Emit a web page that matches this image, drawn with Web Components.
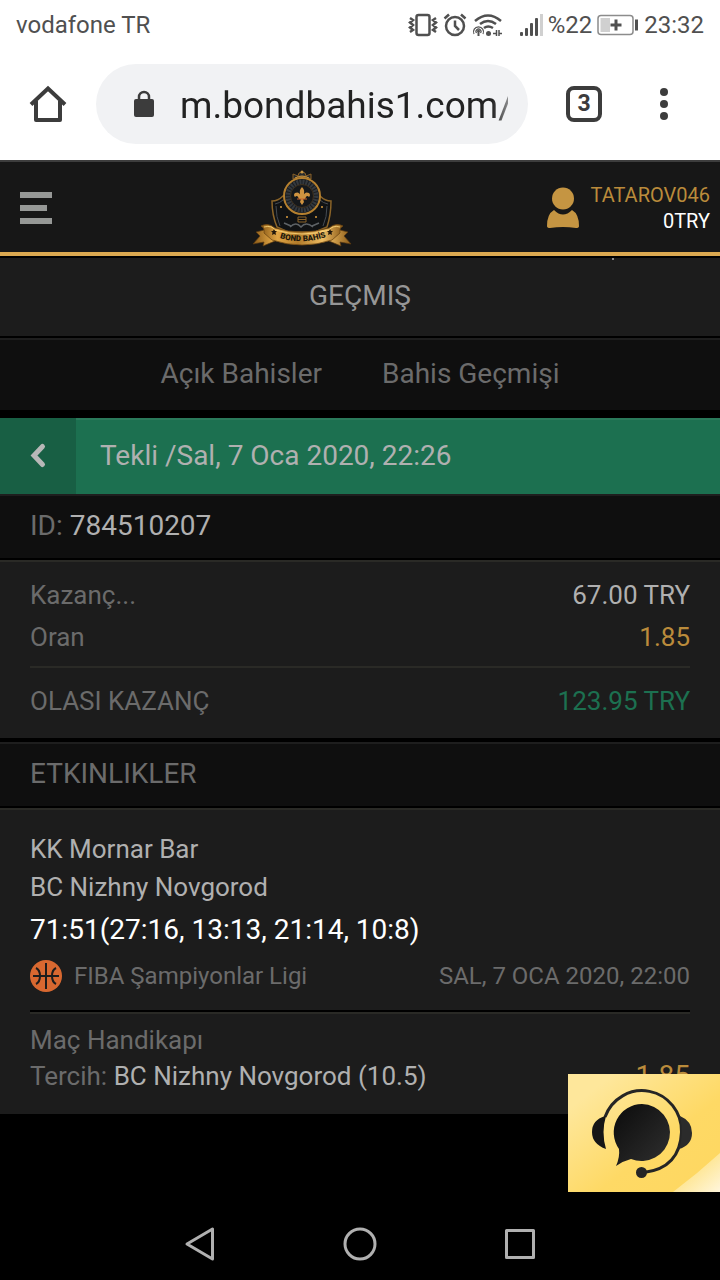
<!DOCTYPE html>
<html lang="tr">
<head>
<meta charset="utf-8">
<meta name="viewport" content="width=device-width, initial-scale=1">
<title>Bahis Geçmişi</title>
<style>
  body {
    margin: 0;
    background: #000;
    font-family: Roboto, "Liberation Sans", sans-serif;
    font-size: 26px;
    color: #6b6b6b;
    --panel: #1c1c1c;
    --dark: #0f0f0f;
    --line: #2a2a26;
    --gold: #ba8b3b;
    --green: #1c7050;
    --light: #b0b0b0;
  }
</style>
</head>
<body>
<bet-app></bet-app>

<script>
class StatusBar extends HTMLElement {
  connectedCallback() {
    this.attachShadow({ mode: 'open' }).innerHTML = `
    <style>
      :host {
        display: flex;
        align-items: center;
        justify-content: space-between;
        padding: 0 16px;
        background: #fff;
        color: #505050;
        font-size: 24px;
        line-height: 50px;
      }

      .icons {
        display: flex;
        align-items: center;
        gap: 5px;
      }

      svg {
        display: block;
      }

      .signal {
        margin-left: 12px;
      }
    </style>
    <span>vodafone TR</span>
    <div class="icons">
      <svg width="30" height="24" viewBox="0 0 30 24" fill="none" stroke="#505050">
        <rect x="8.5" y="2" width="13" height="20" rx="2" stroke-width="2.5"/>
        <path d="M2 5l3 2-3 2.500 3 2.500-3 2.500 3 2.500-3 2M28 5l-3 2 3 2.500-3 2.500 3 2.500-3 2.500 3 2" stroke-width="2.500"/>
      </svg>
      <svg width="24" height="24" viewBox="0 0 24 24" fill="none" stroke="#505050" stroke-width="2.500">
        <circle cx="12" cy="13" r="9"/>
        <path d="M12 7.500V13l4 4M1.500 5.500 6 1.500M22.500 5.500 18 1.500"/>
      </svg>
      <svg width="30" height="24" viewBox="0 0 30 24" fill="none" stroke="#505050">
        <path d="M3 8Q16-3 29 8M8 11q8-6 16 0M12 15q4-3 9 0" stroke-width="2.500"/>
        <path d="M2 21a5 5 0 1 1 9 0M4.500 20a2.500 2.500 0 1 1 4 0" stroke-width="1.200"/>
        <circle cx="6.500" cy="18" r="1" fill="#505050"/>
        <path d="M6.500 18v5" stroke-width="2"/>
        <circle cx="16.500" cy="20.500" r="2.500" fill="#505050" stroke="none"/>
        <path d="M21 20.500h3.500V17v6M30 20.500h-3V17v6" stroke-width="1.500"/>
      </svg>
      <svg class="signal" width="24" height="24" viewBox="0 0 24 24" fill="#505050">
        <rect x="1" y="19" width="3" height="4" rx="1"/>
        <rect x="6" y="15" width="3" height="8" rx="1"/>
        <rect x="11" y="10" width="3" height="13" rx="1"/>
        <rect x="16" y="5" width="3" height="18" rx="1"/>
        <rect x="21" y="1" width="3" height="22" fill="#d0d0d0"/>
      </svg>
      <span>%22</span>
      <svg width="42" height="22" viewBox="0 0 42 22">
        <rect x="1" y="1.500" width="35" height="19" rx="3" fill="none" stroke="#8c8c8c" stroke-width="1.500"/>
        <path d="M3.500 4H13v14H3.500z" fill="#d0d0d0"/>
        <path d="M19 5.500v11M13.500 11h11" stroke="#505050" stroke-width="3"/>
        <path d="M39.500 5.500v11" stroke="#505050" stroke-width="3"/>
      </svg>
      <span>23:32</span>
    </div>
    `;
  }
}

class BrowserBar extends HTMLElement {
  connectedCallback() {
    this.attachShadow({ mode: 'open' }).innerHTML = `
    <style>
      :host {
        display: flex;
        align-items: center;
        padding: 14px 48px 16px 28px;
        background: #fff;
        border-bottom: 2px solid #3d3d3d;
      }

      button {
        display: grid;
        place-items: center;
        margin: 0;
        padding: 0;
        border: 0;
        background: none;
        color: #3c3c3c;
        font: inherit;
        cursor: pointer;
      }

      svg {
        display: block;
      }

      .address {
        display: flex;
        align-items: center;
        flex: 1;
        min-width: 0;
        height: 80px;
        margin: 0 38px 0 28px;
        padding: 0 20px 0 36px;
        box-sizing: border-box;
        border-radius: 40px;
        background: #f1f2f4;
      }

      input {
        flex: 1;
        min-width: 0;
        margin-left: 24px;
        padding: 2px 0 0;
        border: 0;
        outline: 0;
        background: none;
        font: inherit;
        font-size: 37px;
        color: #222;
        -webkit-mask-image: linear-gradient(to left, rgba(0, 0, 0, .5), #000 16px);
        mask-image: linear-gradient(to left, rgba(0, 0, 0, .5), #000 16px);
      }

      .tabs {
        width: 36px;
        height: 36px;
        margin-right: 54px;
        box-sizing: border-box;
        border: 4px solid #3c3c3c;
        border-radius: 8px;
        font-size: 23px;
        font-weight: 700;
        line-height: 28px;
      }
    </style>
    <button aria-label="Ana sayfa">
      <svg width="40" height="40" viewBox="0 0 40 40" fill="none" stroke="#3c3c3c" stroke-width="4" stroke-linejoin="round">
        <path d="M3 20.500 20 4.500l17 16" stroke-linejoin="miter"/>
        <path d="M8 17v19h24V17"/>
      </svg>
    </button>
    <div class="address">
      <svg width="24" height="28" viewBox="0 0 24 28">
        <path d="M7 10V7a5 5 0 0 1 10 0v3" fill="none" stroke="#3c3c3c" stroke-width="2.500"/>
        <rect x="2" y="9" width="20" height="18" rx="2" fill="#3c3c3c"/>
      </svg>
      <input type="text" aria-label="Adres" value="m.bondbahis1.com/">
    </div>
    <button class="tabs" aria-label="Sekmeler">3</button>
    <button aria-label="Menü">
      <svg width="16" height="40" viewBox="0 0 16 40" fill="#3c3c3c">
        <circle cx="8" cy="8" r="4"/>
        <circle cx="8" cy="20" r="4"/>
        <circle cx="8" cy="32" r="4"/>
      </svg>
    </button>
    `;
  }
}

class BondLogo extends HTMLElement {
  connectedCallback() {
    this.attachShadow({ mode: 'open' }).innerHTML = `
    <style>
      :host {
        display: block;
      }

      svg {
        display: block;
      }
    </style>
    <svg width="100" height="80" viewBox="0 0 100 80">
      <defs>
        <linearGradient id="gold" x1="0" x2="1" y1="0" y2="0">
          <stop offset="0" stop-color="#8a5a18"/>
          <stop offset=".2" stop-color="#e0a544"/>
          <stop offset=".45" stop-color="#b07a2a"/>
          <stop offset=".75" stop-color="#efbd62"/>
          <stop offset="1" stop-color="#8a5a18"/>
        </linearGradient>
        <path id="curve" d="M28 70Q50 77 74 69"/>
      </defs>
      <!-- shield -->
      <path d="M20 33q6 0 11-5h37q5 5 11 5 0 14-4 26l-12 5H36l-11-5q-5-12-5-26z" fill="#101214" stroke="#8b6428" stroke-width="1.500"/>
      <path d="M23 36q5-1 8-4M76 36q-5-1-8-4M24 38q0 11 4 20M75 38q0 11-4 20" fill="none" stroke="#454b52"/>
      <path d="M29 38v2M70 38v2M35 48v2M64 48v2" stroke="#a87a34" stroke-width="2"/>
      <path d="M38 59q6-6 11 0 5-6 12 0M32 55l7 3M67 55l-7 3" fill="none" stroke="#5d6266" stroke-width="1.500"/>
      <!-- crown -->
      <path d="M41 11V6l5 2 1-3 3-1 3 1 1 3 5-2v5q-9-5-18 0z" fill="#262a2e" stroke="#8a6026"/>
      <circle cx="50" cy="4" r="1.500" fill="#c89644"/>
      <path d="M43 10q7-4 14 0" fill="none" stroke="#c89644"/>
      <!-- medallion -->
      <circle cx="50" cy="28" r="18" fill="#191c20" stroke="#b5802f" stroke-width="2"/>
      <circle cx="50" cy="28" r="14" fill="none" stroke="#34393e" stroke-width="5" stroke-dasharray="2 1"/>
      <circle cx="50" cy="28" r="11.500" fill="#15181b" stroke="#4a371e" stroke-width=".8"/>
      <path d="M50 19q-4 4-1 9-2-5-6-3-2 2 0 4 2-2 3 0 1 3 3 2l-1 3 2 3 2-3-1-3q2 1 3-2 1-2 3 0 2-2 0-4-4-2-6 3 3-5-1-9z" fill="#cf9340"/>
      <path d="M45 31h10" stroke="#c8612c"/>
      <path d="M46 49h8v5h-8zM46 51.500h8" fill="none" stroke="#8a6229"/>
      <!-- ribbon -->
      <path d="M16 61 4 64l4 4-7 8 11-2-1 4 12-5zM84 61l12 3-4 4 7 8-11-2 1 4-12-5z" fill="url(#gold)" stroke="#5c3a10" stroke-width=".7"/>
      <path d="M9 58q7-4 14 2 27 8 54 0 7-6 14-2-4 2-3 7l-8 7q-30 10-60 0l-8-7q1-5-3-7z" fill="url(#gold)" stroke="#6f4813" stroke-width=".8"/>
      <path d="M12 59q8-2 11 3 27 8 54 0 4-5 11-3" fill="none" stroke="#ffda7f" stroke-width=".8"/>
      <path d="m22 61 1 2h2l-1.500 1.500.5 2.500-2-1-2 1 .5-2.500L19 63h2zM78 61l1 2h2l-1.500 1.500.5 2.500-2-1-2 1 .5-2.500L75 63h2z" fill="#21180c"/>
      <text font-family="Roboto, sans-serif" font-size="8" font-weight="900" fill="#21180c"><textPath href="#curve" startOffset="50%" text-anchor="middle">BOND BAHİS</textPath></text>
    </svg>
    `;
  }
}

class SiteHeader extends HTMLElement {
  connectedCallback() {
    this.attachShadow({ mode: 'open' }).innerHTML = `
    <style>
      :host {
        display: flex;
        align-items: center;
        justify-content: space-between;
        padding: 6px 10px 4px 20px;
        background: #171717;
        border-bottom: 4px solid #dba850;
        font-size: 20px;
        line-height: 26px;
      }

      button {
        width: 38px;
        height: 44px;
        margin: 0;
        padding: 0;
        border: 0;
        background: none;
        cursor: pointer;
      }

      svg {
        display: block;
      }

      .user {
        display: flex;
        align-items: center;
        gap: 12px;
        color: var(--gold);
        text-align: right;
        text-decoration: none;
      }

      .balance {
        color: #fff;
      }
    </style>
    <button aria-label="Menü">
      <svg width="32" height="32" viewBox="0 0 32 32" fill="#969896">
        <path d="M0 0h32v6H0zM0 13h27v6H0zM0 26h32v6H0z"/>
      </svg>
    </button>
    <bond-logo></bond-logo>
    <a class="user" href="#hesap">
      <svg width="32" height="42" viewBox="0 0 32 42" fill="#c59542">
        <circle cx="16" cy="11.500" r="11"/>
        <path d="M7 23q9 9 18 0 7 4 7 16 0 2-3 2-13-2-26 0-3 0-3-2 0-12 7-16z"/>
      </svg>
      <div>
        <div><slot name="name"></slot></div>
        <div class="balance"><slot name="balance"></slot></div>
      </div>
    </a>
    `;
  }
}

class HistoryNav extends HTMLElement {
  connectedCallback() {
    this.attachShadow({ mode: 'open' }).innerHTML = `
    <style>
      :host {
        display: block;
        padding-top: 2px;
        font-size: 28px;
      }

      h1 {
        position: relative;
        margin: 0 0 2px;
        padding-bottom: 2px;
        background: var(--panel);
        color: #969696;
        font-size: 28px;
        font-weight: 400;
        line-height: 76px;
        text-align: center;
      }

      h1::after {
        content: "";
        position: absolute;
        top: 0;
        right: 106px;
        width: 2px;
        height: 2px;
        background: #8c8c8c;
      }

      nav {
        display: flex;
        justify-content: center;
        gap: 60px;
        padding-bottom: 2px;
        background: var(--dark);
        border-top: 2px solid #1e1e1e;
        line-height: 68px;
      }

      a {
        color: inherit;
        text-decoration: none;
      }
    </style>
    <h1>GEÇMIŞ</h1>
    <nav>
      <a href="#acik">Açık Bahisler</a>
      <a href="#gecmis">Bahis Geçmişi</a>
    </nav>
    `;
  }
}

class SlipTitle extends HTMLElement {
  connectedCallback() {
    this.attachShadow({ mode: 'open' }).innerHTML = `
    <style>
      :host {
        display: flex;
        margin-top: 8px;
        background: var(--green);
        box-shadow: inset 0 2px #2a795b;
        color: var(--light);
        font-size: 28px;
        line-height: 76px;
      }

      button {
        display: grid;
        place-items: center;
        width: 76px;
        margin: 0;
        padding: 0;
        border: 0;
        background: #185f44;
        cursor: pointer;
      }

      h2 {
        margin: 0 0 0 24px;
        font-size: 28px;
        font-weight: 400;
      }
    </style>
    <button aria-label="Geri">
      <svg width="24" height="28" viewBox="0 0 24 28" fill="none" stroke="#b8b8b8" stroke-width="5" stroke-linecap="round">
        <path d="M16.500 4.500 8 13.500l8.500 9"/>
      </svg>
    </button>
    <h2><slot></slot></h2>
    `;
  }
}

class SectionBar extends HTMLElement {
  connectedCallback() {
    this.attachShadow({ mode: 'open' }).innerHTML = `
    <style>
      :host {
        display: block;
        padding: 0 30px 2px;
        margin-bottom: 2px;
        background: var(--dark);
        border-top: 2px solid #1e1e1e;
        font-size: 28px;
        line-height: 60px;
      }

      ::slotted(b) {
        color: var(--light);
        font-weight: 400;
      }
    </style>
    <slot></slot>
    `;
  }
}

class BetSummary extends HTMLElement {
  connectedCallback() {
    this.attachShadow({ mode: 'open' }).innerHTML = `
    <style>
      :host {
        display: block;
        margin-bottom: 4px;
        padding: 12px 30px 16px;
        background: var(--panel);
        border-top: 2px solid var(--line);
        line-height: 42px;
      }

      dl {
        margin: 0;
      }

      dl div {
        display: flex;
        justify-content: space-between;
      }

      dd {
        margin: 0;
        color: var(--light);
      }

      .odds {
        color: var(--gold);
      }

      .total {
        margin-top: 8px;
        padding-top: 12px;
        border-top: 2px solid var(--line);
      }

      .total dd {
        color: var(--green);
      }
    </style>
    <dl>
      <div><dt>Kazanç...</dt><dd>67.00 TRY</dd></div>
      <div><dt>Oran</dt><dd class="odds">1.85</dd></div>
      <div class="total"><dt>OLASI KAZANÇ</dt><dd>123.95 TRY</dd></div>
    </dl>
    `;
  }
}

class EventCard extends HTMLElement {
  connectedCallback() {
    this.attachShadow({ mode: 'open' }).innerHTML = `
    <style>
      :host {
        display: block;
        padding: 20px 30px;
        background: var(--panel);
        border-top: 2px solid var(--line);
        line-height: 38px;
      }

      .team {
        color: var(--light);
      }

      .score {
        color: #fff;
        font-size: 28px;
        line-height: 48px;
      }

      .league {
        display: flex;
        align-items: center;
        gap: 12px;
        padding: 6px 0 18px;
        border-bottom: 2px solid #000;
        font-size: 24px;
        line-height: 32px;
      }

      .league time {
        margin-left: auto;
      }

      .pick {
        padding-top: 8px;
        border-top: 2px solid var(--line);
        line-height: 36px;
      }

      .row {
        display: flex;
        align-items: baseline;
        justify-content: space-between;
      }

      .odds {
        color: var(--gold);
        font-size: 28px;
      }
    </style>
    <div class="team"><slot name="home"></slot></div>
    <div class="team"><slot name="away"></slot></div>
    <div class="score"><slot name="score"></slot></div>
    <div class="league">
      <svg width="32" height="32" viewBox="0 0 32 32">
        <circle cx="16" cy="16" r="16" fill="#d86830"/>
        <path d="M16 3v26M3 16h26M6 8q4 2 4 8t-4 8M26 8q-4 2-4 8t4 8" fill="none" stroke="#1c1c1c" stroke-width="2"/>
      </svg>
      <slot name="league"></slot>
      <time datetime="2020-01-07T22:00"><slot name="time"></slot></time>
    </div>
    <div class="pick">
      <div><slot name="market"></slot></div>
      <div class="row">
        <div>Tercih: <span class="team"><slot name="pick"></slot></span></div>
        <div class="odds"><slot name="odds"></slot></div>
      </div>
    </div>
    `;
  }
}

class ChatButton extends HTMLElement {
  connectedCallback() {
    this.attachShadow({ mode: 'open' }).innerHTML = `
    <style>
      :host {
        display: block;
      }

      button {
        display: block;
        margin: 0;
        padding: 0;
        border: 0;
        background: none;
        cursor: pointer;
      }

      svg {
        display: block;
      }
    </style>
    <button aria-label="Canlı destek">
      <svg width="152" height="118" viewBox="0 0 152 118">
        <defs>
          <linearGradient id="bg" x1="0" y1="0" x2="1" y2="1">
            <stop offset=".15" stop-color="#fee79b"/>
            <stop offset=".6" stop-color="#fed965"/>
            <stop offset="1" stop-color="#fed760"/>
          </linearGradient>
          <linearGradient id="shine" x1="0" y1="0" x2="1" y2="1">
            <stop offset=".4" stop-color="#fee48c"/>
            <stop offset="1" stop-color="#fff6dc"/>
          </linearGradient>
          <linearGradient id="ink" x1="0" y1="0" x2="1" y2="1">
            <stop offset="0" stop-color="#0b0b0b"/>
            <stop offset="1" stop-color="#303030"/>
          </linearGradient>
        </defs>
        <path d="M0 0h152v118H0z" fill="url(#bg)"/>
        <path d="M105 118q24-18 47-39v39z" fill="url(#shine)"/>
        <path d="M37 43a39.500 40.500 0 0 1 76.500 15Q112 94 76 98.500" fill="none" stroke="#252525" stroke-width="3"/>
        <path d="M37 42q-13 4-13 16t14 17q-5-17 0-33z" fill="#161616"/>
        <path d="M112 42q12 5 12 17t-13 16q5-16 1-33z" fill="#2b2b2b"/>
        <circle cx="73.500" cy="98.500" r="5.500" fill="#252525"/>
        <path d="M74 30a28.500 28.500 0 1 1-11 55q-8 2-15 7 4-9 3-17A28.500 28.500 0 0 1 74 30z" fill="url(#ink)"/>
      </svg>
    </button>
    `;
  }
}

class SystemNav extends HTMLElement {
  connectedCallback() {
    this.attachShadow({ mode: 'open' }).innerHTML = `
    <style>
      :host {
        display: flex;
        align-items: center;
        justify-content: center;
        gap: 120px;
        height: 72px;
        background: #000;
      }

      button {
        margin: 0;
        padding: 0;
        border: 0;
        background: none;
        cursor: pointer;
      }

      svg {
        display: block;
        fill: none;
        stroke: #b0b0b0;
        stroke-width: 3;
        stroke-linejoin: round;
      }
    </style>
    <button aria-label="Geri"><svg width="40" height="40" viewBox="0 0 40 40"><path d="M32.500 5v30L7 20z"/></svg></button>
    <button aria-label="Ana ekran"><svg width="40" height="40" viewBox="0 0 40 40"><circle cx="20" cy="20" r="15"/></svg></button>
    <button aria-label="Son uygulamalar"><svg width="40" height="40" viewBox="0 0 40 40"><path d="M6.500 6.500h27v27h-27z"/></svg></button>
    `;
  }
}

class BetApp extends HTMLElement {
  connectedCallback() {
    this.attachShadow({ mode: 'open' }).innerHTML = `
    <style>
      :host {
        display: flex;
        flex-direction: column;
        min-height: 100vh;
      }

      main {
        position: relative;
        flex: 1;
      }

      /* floats over the page content */
      chat-button {
        position: absolute;
        right: 0;
        bottom: 16px;
      }
    </style>
    <status-bar></status-bar>
    <browser-bar></browser-bar>
    <main>
      <site-header>
        <span slot="name">TATAROV046</span>
        <span slot="balance">0TRY</span>
      </site-header>
      <history-nav></history-nav>
      <slip-title>Tekli /Sal, 7 Oca 2020, 22:26</slip-title>
      <section-bar>ID: <b>784510207</b></section-bar>
      <bet-summary></bet-summary>
      <section-bar>ETKINLIKLER</section-bar>
      <event-card>
        <span slot="home">KK Mornar Bar</span>
        <span slot="away">BC Nizhny Novgorod</span>
        <span slot="score">71:51(27:16, 13:13, 21:14, 10:8)</span>
        <span slot="league">FIBA Şampiyonlar Ligi</span>
        <span slot="time">SAL, 7 OCA 2020, 22:00</span>
        <span slot="market">Maç Handikapı</span>
        <span slot="pick">BC Nizhny Novgorod (10.5)</span>
        <span slot="odds">1.85</span>
      </event-card>
      <chat-button></chat-button>
    </main>
    <system-nav></system-nav>
    `;
  }
}

customElements.define('status-bar', StatusBar);
customElements.define('browser-bar', BrowserBar);
customElements.define('bond-logo', BondLogo);
customElements.define('site-header', SiteHeader);
customElements.define('history-nav', HistoryNav);
customElements.define('slip-title', SlipTitle);
customElements.define('section-bar', SectionBar);
customElements.define('bet-summary', BetSummary);
customElements.define('event-card', EventCard);
customElements.define('chat-button', ChatButton);
customElements.define('system-nav', SystemNav);
customElements.define('bet-app', BetApp);
</script>
</body>
</html>
